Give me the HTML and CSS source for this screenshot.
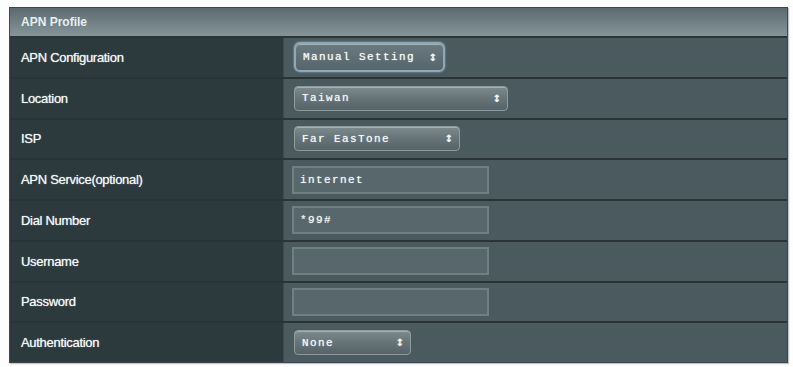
FILE: index.html
```html
<!DOCTYPE html>
<html>
<head>
<meta charset="utf-8">
<link rel="stylesheet" href="styles.css">
</head>
<body>
<div class="panel">
  <div class="head">APN Profile</div>
  <div class="row">
    <div class="label">APN Configuration</div>
    <div class="field"><div class="select focus w150"><span>Manual Setting</span><span class="arr">&#8597;</span></div></div>
  </div>
  <div class="row">
    <div class="label">Location</div>
    <div class="field"><div class="select w214"><span>Taiwan</span><span class="arr">&#8597;</span></div></div>
  </div>
  <div class="row">
    <div class="label">ISP</div>
    <div class="field"><div class="select w166"><span>Far EasTone</span><span class="arr">&#8597;</span></div></div>
  </div>
  <div class="row">
    <div class="label">APN Service(optional)</div>
    <div class="field"><div class="input">internet</div></div>
  </div>
  <div class="row">
    <div class="label">Dial Number</div>
    <div class="field"><div class="input">*99#</div></div>
  </div>
  <div class="row">
    <div class="label">Username</div>
    <div class="field"><div class="input"></div></div>
  </div>
  <div class="row">
    <div class="label">Password</div>
    <div class="field"><div class="input"></div></div>
  </div>
  <div class="row last">
    <div class="label">Authentication</div>
    <div class="field"><div class="select w117"><span>None</span><span class="arr">&#8597;</span></div></div>
  </div>
</div>
</body>
</html>
```
FILE: styles.css
```css
html, body {
  margin: 0;
  padding: 0;
  background: #fdfdfd;
}
body {
  width: 793px;
  height: 367px;
  overflow: hidden;
  font-family: "Liberation Sans", Arial, sans-serif;
}
.panel {
  margin: 7px 0 0 9px;
  width: 779px;
  height: 356px;
  background: #2c383b;
  border: 1px solid #3c484b;
  box-sizing: border-box;
  display: flex;
  flex-direction: column;
  box-shadow: 1px 1px 1px #bfc6c8;
}
.head {
  height: 30px;
  flex: none;
  box-sizing: border-box;
  padding-left: 11px;
  display: flex;
  align-items: center;
  font-size: 12px;
  font-weight: bold;
  color: #e8eeee;
  background: linear-gradient(#5c6a6e, #6f7e82 45%, #84959a);
  border-bottom: 2px solid #2a3538;
}
.row {
  flex: 1;
  display: grid;
  grid-template-columns: 273px 1fr;
  border-bottom: 2px solid #2a3437;
}
.row.last {
  border-bottom: none;
}
.label {
  background: #2c3a3d;
  color: #f2f5f5;
  font-size: 13px;
  display: flex;
  align-items: center;
  padding-left: 11px;
  letter-spacing: -0.3px;
  text-shadow: 0 0 1px #cfd8d8;
}
.field {
  background: #4a5a5f;
  display: flex;
  align-items: center;
  padding-left: 10px;
  border-left: 1px solid #3d4b4f;
}
.select {
  height: 25px;
  box-sizing: border-box;
  border-radius: 4px;
  border: 1px solid #8d9b9e;
  background: linear-gradient(#7d8b8e, #667478 50%, #56646a);
  display: flex;
  align-items: center;
  justify-content: space-between;
  padding: 0 6px 0 7px;
  font-family: "Liberation Mono", "DejaVu Sans Mono", monospace;
  font-size: 11px;
  letter-spacing: 1.4px;
  color: #f4f6f6;
  text-shadow: 0 0 1px #e0e6e6;
  box-shadow: inset 0 1px 0 #a5b1b3;
}
.select.focus {
  height: 30px;
  border: 2px solid #8fa8b8;
  border-radius: 6px;
  box-shadow: 0 0 2px #9fb9c9, inset 0 1px 0 #a5b1b3;
  background: linear-gradient(#6a7a80, #55656b);
}
.arr {
  font-family: "DejaVu Sans", sans-serif;
  font-size: 10px;
  font-weight: bold;
  letter-spacing: 0;
}
.w150 { width: 151px; }
.w214 { width: 214px; }
.w166 { width: 166px; }
.w117 { width: 117px; }
.input {
  width: 197px;
  height: 28px;
  box-sizing: border-box;
  border: 2px solid #6f7f83;
  background: #57676c;
  display: flex;
  align-items: center;
  padding-left: 6px;
  font-family: "Liberation Mono", "DejaVu Sans Mono", monospace;
  font-size: 11px;
  letter-spacing: 1.4px;
  color: #eef2f2;
  text-shadow: 0 0 1px #e0e6e6;
  margin-left: -2px;
}
```
